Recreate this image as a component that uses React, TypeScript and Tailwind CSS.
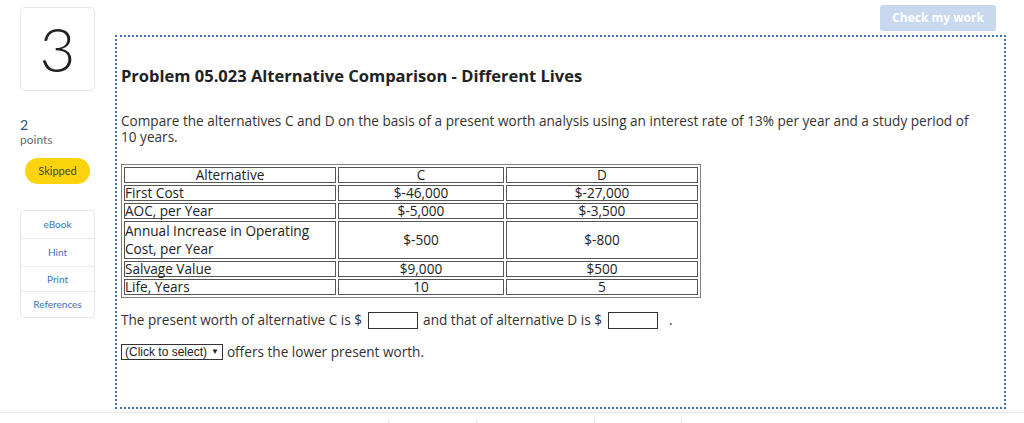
import React from "react";

const rows = [
  { label: "First Cost", c: "$-46,000", d: "$-27,000" },
  { label: "AOC, per Year", c: "$-5,000", d: "$-3,500" },
  { label: "Annual Increase in Operating Cost, per Year", c: "$-500", d: "$-800" },
  { label: "Salvage Value", c: "$9,000", d: "$500" },
  { label: "Life, Years", c: "10", d: "5" },
];

function Sidebar() {
  return (
    <aside className="w-[115px] shrink-0 pl-[20px] pt-[7px]">
      <div className="w-[75px] h-[84px] rounded-[5px] border border-[#e6e6e6] flex items-center justify-center">
        <span className="text-[62px] leading-none font-light text-[#222] -mt-[2px]">3</span>
      </div>
      <div className="mt-[26px] text-[14px] leading-[16px] text-[#2b4f7e]">2</div>
      <div className="text-[12px] leading-[14px] text-[#6b6b6b]">points</div>
      <div className="mt-[11px] ml-[5px] w-[65px] h-[26px] rounded-full bg-[#fcd40d] flex items-center justify-center text-[11px] text-[#444]">
        Skipped
      </div>
      <div className="mt-[26px] w-[75px] rounded-[4px] border border-[#e6e6e6] text-[10px] text-[#3f72b5] text-center">
        <div className="h-[28px] flex items-center justify-center border-b border-[#ececec]">eBook</div>
        <div className="h-[28px] flex items-center justify-center border-b border-[#ececec]">Hint</div>
        <div className="h-[25px] flex items-center justify-center border-b border-[#ececec]">Print</div>
        <div className="h-[25px] flex items-center justify-center">References</div>
      </div>
    </aside>
  );
}

function Blank() {
  return <span className="inline-block align-middle w-[50px] h-[17px] border border-[#333] bg-white mx-[2px] -mt-[2px]" />;
}

export default function App() {
  return (
    <div className="relative w-[1024px] h-[423px] bg-white overflow-hidden font-['Open_Sans',sans-serif] text-[#333]">
      <div className="flex font-['Lato',sans-serif]">
        <Sidebar />
        <main className="w-[891px] font-['Open_Sans',sans-serif]">
          <div className="h-[35px] flex justify-end items-start pt-[5px] pr-[10px]">
            <button className="w-[116px] h-[26px] rounded-[3px] bg-[#c8d9ef] text-white text-[12px] font-bold">
              Check my work
            </button>
          </div>
          <section className="h-[374px] border-2 border-dotted border-[#4670ab] pl-[4px] pr-[30px]">
            <h1 className="mt-[29px] text-[16.5px] leading-[20px] font-bold text-[#222]">
              Problem 05.023 Alternative Comparison - Different Lives
            </h1>
            <p className="mt-[27px] text-[13.6px] leading-[16px]">
              Compare the alternatives C and D on the basis of a present worth analysis using an interest rate of 13% per year and a study period of 10 years.
            </p>
            <table className="mt-[19px] w-[580px] border border-[#808080] border-separate border-spacing-[2px] text-[13.6px] leading-[14px] text-[#222]">
              <colgroup>
                <col className="w-[212px]" />
                <col className="w-[166px]" />
                <col />
              </colgroup>
              <tbody>
                <tr>
                  <td className="border border-[#555] text-center p-0">Alternative</td>
                  <td className="border border-[#555] text-center p-0">C</td>
                  <td className="border border-[#555] text-center p-0">D</td>
                </tr>
                {rows.map((r) => (
                  <tr key={r.label}>
                    <td className={r.label.length > 20 ? "border border-[#555] p-0 leading-[18px]" : "border border-[#555] p-0"}>
                      {r.label}
                    </td>
                    <td className="border border-[#555] text-center p-0">{r.c}</td>
                    <td className="border border-[#555] text-center p-0">{r.d}</td>
                  </tr>
                ))}
              </tbody>
            </table>
            <p className="mt-[12px] text-[13.6px] leading-[20px]">
              The present worth of alternative C is ${" "}
              <Blank /> and that of alternative D is ${" "}
              <Blank /> <span className="ml-[6px]">.</span>
            </p>
            <div className="mt-[12px] flex items-center text-[13.6px]">
              <span className="h-[16px] px-[3px] border border-[#333] flex items-center font-['Liberation_Sans',Arial,sans-serif] text-[12px] text-[#222] leading-none">
                (Click to select) <span className="ml-[4px] text-[8px]">▼</span>
              </span>
              <span className="ml-[4px]">offers the lower present worth.</span>
            </div>
          </section>
        </main>
      </div>
      <div className="absolute left-0 right-0 top-[412px] border-t border-[#ececec]" />
      <div className="absolute top-[418px] left-[388px] h-[5px] border-l border-[#e4e4e4]" />
      <div className="absolute top-[418px] left-[476px] h-[5px] border-l border-[#e4e4e4]" />
      <div className="absolute top-[418px] left-[594px] h-[5px] border-l border-[#e4e4e4]" />
      <div className="absolute top-[418px] left-[681px] h-[5px] border-l border-[#e4e4e4]" />
    </div>
  );
}
